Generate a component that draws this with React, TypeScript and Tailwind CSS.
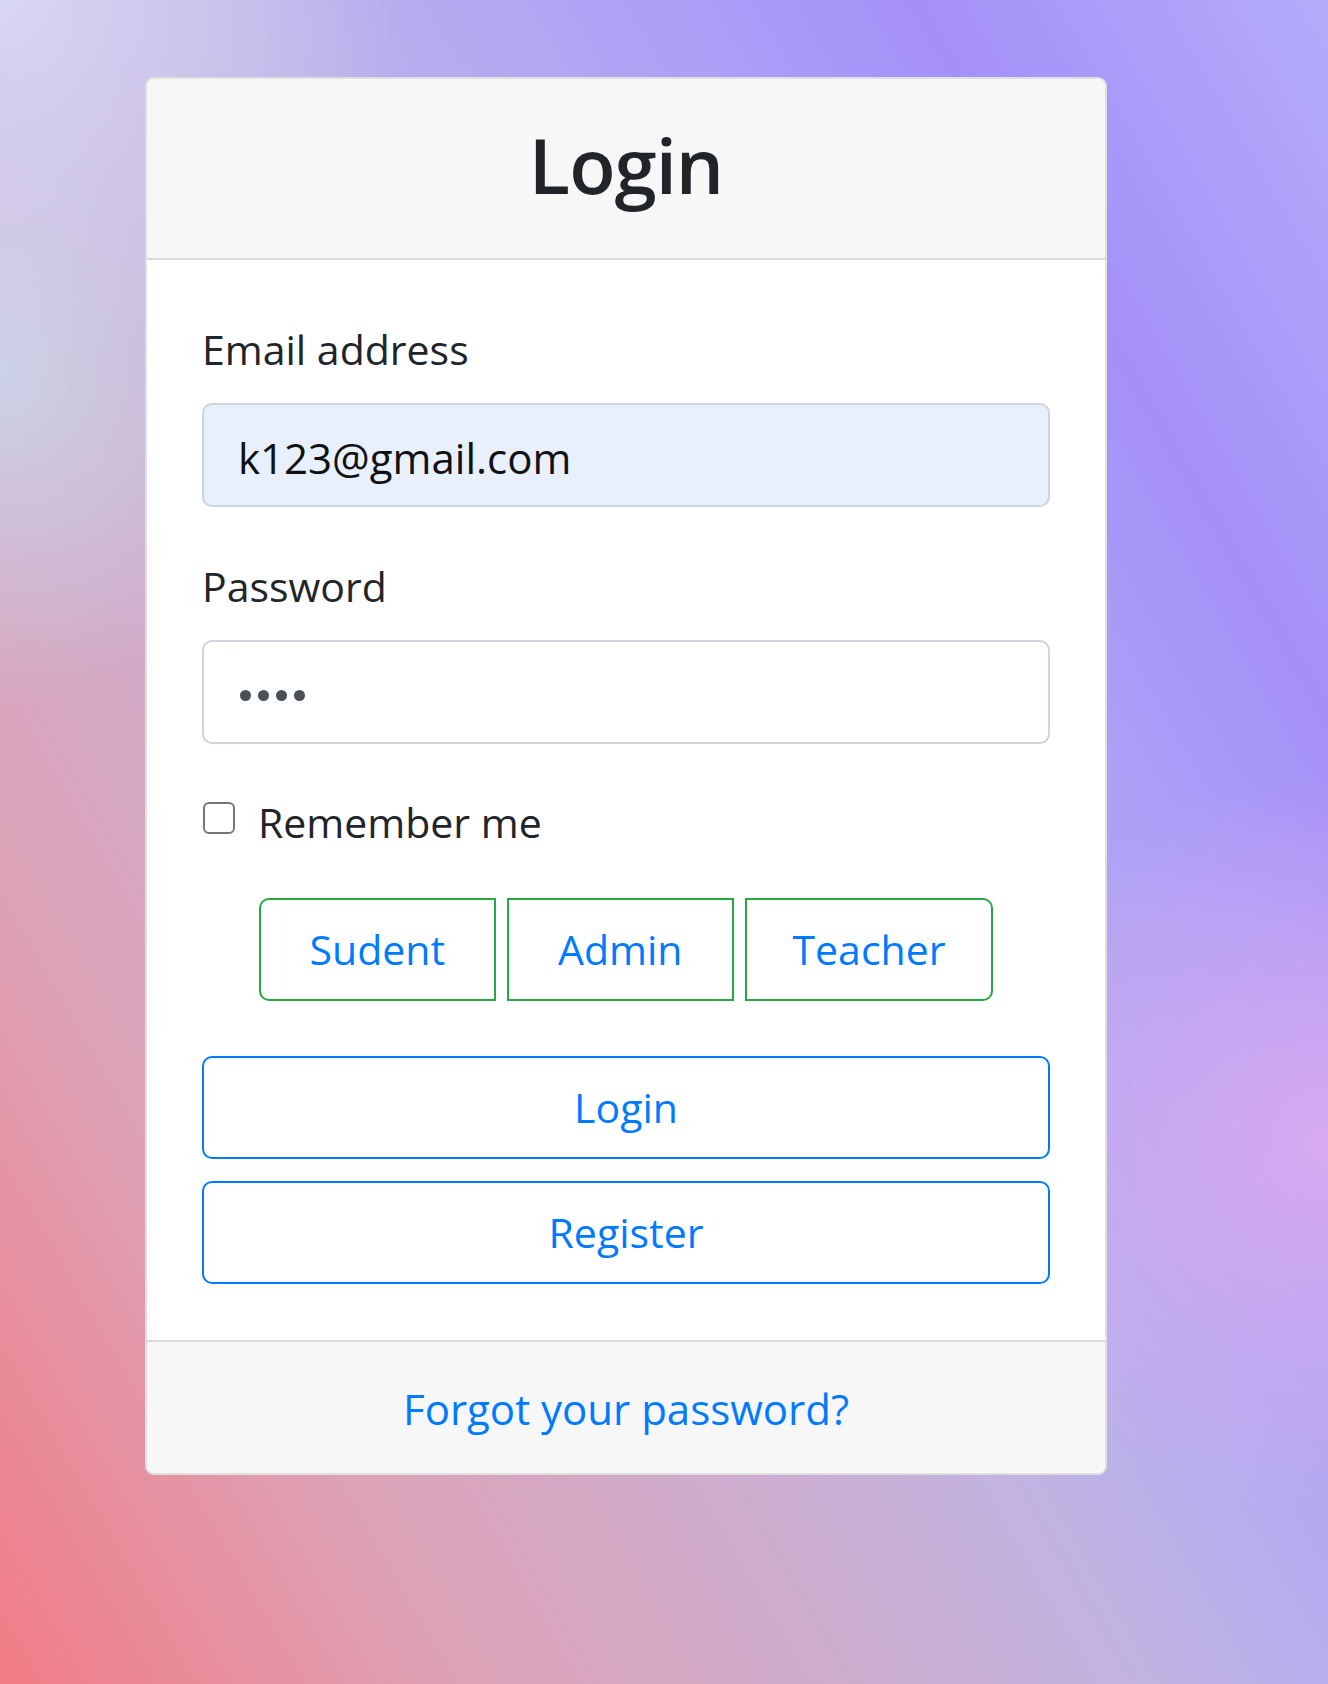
import React from "react";

export default function App() {
  const font = { fontFamily: '"Open Sans", "Noto Sans", sans-serif' };
  return (
    <div
      className="w-full h-[1684px] pt-[77px] pl-[145px] bg-[radial-gradient(ellipse_30%_22%_at_0%_0%,#d8d6f6_0%,transparent_100%),radial-gradient(ellipse_22%_20%_at_0%_22%,#ccd2e8_0%,transparent_100%),radial-gradient(ellipse_30%_22%_at_100%_68%,#d8aaf0_0%,transparent_100%),linear-gradient(60deg,#f27c86_0%,#dda2b6_20%,#cfaccb_35%,#c1b4e2_50%,#b7aeee_58%,#ab9ff7_72%,#a590f8_82%,#b4acfa_100%)]"
      style={font}
    >
      <div className="w-[962px] rounded-[9px] border-2 border-black/[0.125] overflow-hidden bg-white">
        <div className="h-[181px] bg-[#f7f7f7] border-b-2 border-black/[0.125] flex items-center justify-center pb-[8px]">
          <h1 className="text-[76px] font-semibold leading-none text-[#212529] tracking-[-1px]">Login</h1>
        </div>
        <div className="px-[55px] pt-[57px] pb-[56px]">
          <div className="text-[41px] leading-[64px] text-[#212529]">Email address</div>
          <div className="mt-[22px] h-[104px] rounded-[10px] border-2 border-[#ced4da] bg-[#e8f0fe] flex items-center pl-[34px] pt-[5px]">
            <span className="text-[42px] leading-none text-[#111]">k123@gmail.com</span>
          </div>
          <div className="mt-[47px] text-[41px] leading-[64px] text-[#212529]">Password</div>
          <div className="mt-[22px] h-[104px] rounded-[10px] border-2 border-[#ced4da] bg-white flex items-center pl-[36px] pt-[6px] gap-[7px]">
            <span className="w-[11px] h-[11px] rounded-full bg-[#495057]" />
            <span className="w-[11px] h-[11px] rounded-full bg-[#495057]" />
            <span className="w-[11px] h-[11px] rounded-full bg-[#495057]" />
            <span className="w-[11px] h-[11px] rounded-full bg-[#495057]" />
          </div>
          <div className="mt-[46px] flex items-start">
            <span className="mt-[12px] ml-[1px] w-[32px] h-[32px] rounded-[6px] border-2 border-[#767676] bg-white" />
            <span className="ml-[23px] text-[41px] leading-[64px] text-[#212529]">Remember me</span>
          </div>
          <div className="mt-[44px] flex justify-center gap-[11px]">
            <div className="h-[103px] px-[49px] rounded-l-[10px] border-2 border-[#28a745] flex items-center justify-center text-[41px] text-[#007bff]">Sudent</div>
            <div className="h-[103px] px-[49px] border-2 border-[#28a745] flex items-center justify-center text-[41px] text-[#007bff]">Admin</div>
            <div className="h-[103px] px-[46px] rounded-r-[10px] border-2 border-[#28a745] flex items-center justify-center text-[41px] text-[#007bff]">Teacher</div>
          </div>
          <div className="mt-[55px] h-[103px] rounded-[10px] border-2 border-[#007bff] flex items-center justify-center text-[41px] text-[#007bff]">Login</div>
          <div className="mt-[22px] h-[103px] rounded-[10px] border-2 border-[#007bff] flex items-center justify-center text-[41px] text-[#007bff]">Register</div>
        </div>
        <div className="bg-[#f7f7f7] border-t-2 border-black/[0.125] pt-[35px] pb-[32px] flex justify-center">
          <span className="text-[42px] leading-[64px] text-[#007bff]">Forgot your password?</span>
        </div>
      </div>
    </div>
  );
}
